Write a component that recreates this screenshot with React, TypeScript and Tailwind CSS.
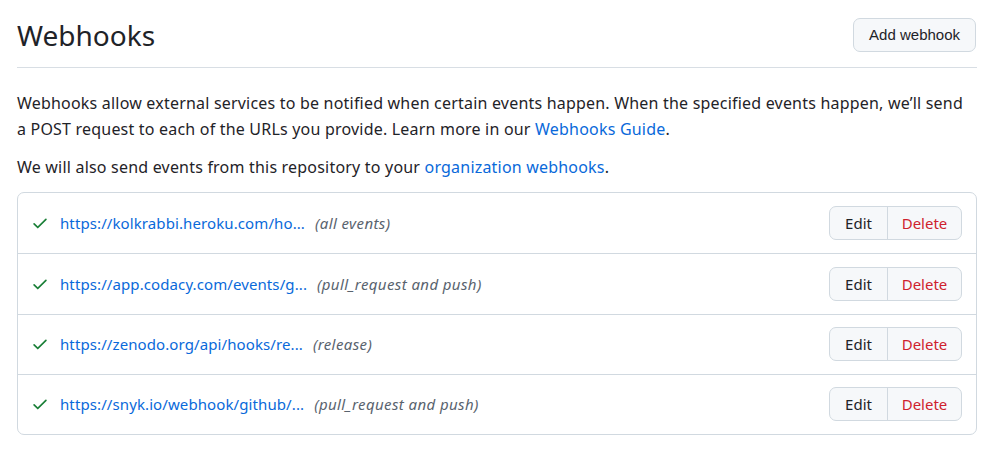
const hooks = [
  { url: "https://kolkrabbi.heroku.com/ho...", events: "(all events)" },
  { url: "https://app.codacy.com/events/g...", events: "(pull_request and push)" },
  { url: "https://zenodo.org/api/hooks/re...", events: "(release)" },
  { url: "https://snyk.io/webhook/github/...", events: "(pull_request and push)" },
];

function CheckIcon() {
  return (
    <svg width="18" height="18" viewBox="0 0 16 16" fill="#1a7f37">
      <path d="M13.78 4.22a.75.75 0 0 1 0 1.06l-7.25 7.25a.75.75 0 0 1-1.06 0L2.22 9.28a.751.751 0 0 1 .018-1.042.751.751 0 0 1 1.042-.018L6 10.94l6.72-6.72a.75.75 0 0 1 1.06 0Z" />
    </svg>
  );
}

export default function App() {
  return (
    <div className="bg-white w-[997px] h-[450px] ps-[17px] pe-[20px] pt-[18px] text-[#1f2328] font-['Noto_Sans',sans-serif]">
      <div className="flex items-center justify-between border-b border-[#d8dee4] pb-[15px]">
        <h2 className="text-[28px] leading-[34px] font-normal">Webhooks</h2>
        <button className="h-[34px] px-[15px] rounded-[7px] border border-[#d1d9e0] bg-[#f6f8fa] text-[15px] font-['Liberation_Sans',sans-serif] me-[1px]">
          Add webhook
        </button>
      </div>

      <p className="mt-[22px] text-[16px] leading-[26px] tracking-[0.2px]">
        Webhooks allow external services to be notified when certain events happen. When the specified events happen, we’ll send
        <br />a POST request to each of the URLs you provide. Learn more in our{" "}
        <a className="text-[#0969da]">Webhooks Guide</a>.
      </p>
      <p className="mt-[12px] text-[16px] leading-[26px] tracking-[0.2px]">
        We will also send events from this repository to your{" "}
        <a className="text-[#0969da]">organization webhooks</a>.
      </p>

      <div className="mt-[12px] border border-[#d1d9e0] rounded-[7px]">
        {hooks.map((h, i) => (
          <div
            key={i}
            className={`flex items-center h-[60.25px] ps-[13px] pe-[14px] ${i > 0 ? "border-t border-[#d1d9e0]" : ""}`}
          >
            <CheckIcon />
            <a className="ms-[11px] text-[15px] tracking-[0.1px] text-[#0969da]">{h.url}</a>
            <span className="ms-[10px] text-[15px] italic tracking-[0.4px] text-[#59636e]">{h.events}</span>
            <div className="ms-auto flex h-[34px] rounded-[7px] border border-[#d1d9e0] bg-[#f6f8fa] text-[15px]">
              <button className="w-[57px]">Edit</button>
              <button className="w-[74px] border-s border-[#d1d9e0] text-[#cf222e]">Delete</button>
            </div>
          </div>
        ))}
      </div>
    </div>
  );
}
